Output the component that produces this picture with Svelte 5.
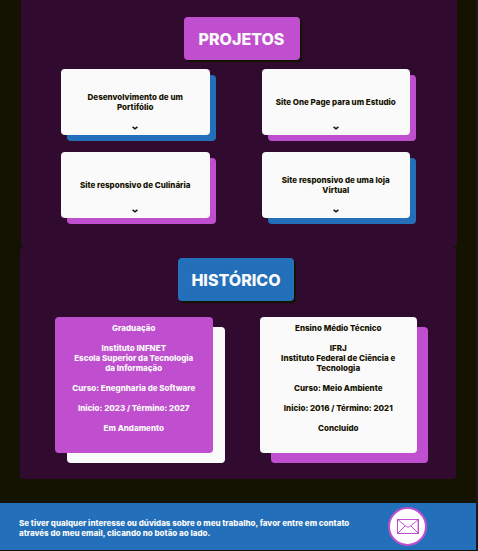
<script>
  const projects = [
    { title: 'Desenvolvimento de um Portifólio', tone: 'blue' },
    { title: 'Site One Page para um Estudio', tone: 'pink' },
    { title: 'Site responsivo de Culinária', tone: 'pink' },
    { title: 'Site responsivo de uma loja Virtual', tone: 'blue' }
  ];

  const history = [
    {
      level: 'Graduação',
      school: 'Instituto INFNET',
      detail: 'Escola Superior da Tecnologia da Informação',
      course: 'Curso: Enegnharia de Software',
      dates: 'Inicio: 2023 / Término: 2027',
      status: 'Em Andamento',
      tone: 'filled'
    },
    {
      level: 'Ensino Médio Técnico',
      school: 'IFRJ',
      detail: 'Instituto Federal de Ciência e Tecnologia',
      course: 'Curso: Meio Ambiente',
      dates: 'Inicio: 2016 / Término: 2021',
      status: 'Concluído',
      tone: 'light'
    }
  ];
</script>

<div class="page">
  <main>
    <section class="panel projects">
      <h2 class="title pink">PROJETOS</h2>
      <div class="project-grid">
        {#each projects as project}
          <button type="button" class="project {project.tone}">
            <span class="name">{project.title}</span>
            <svg class="chevron" viewBox="0 0 6 4" aria-hidden="true">
              <path d="M0.6 0.8 L3 2.8 L5.4 0.8" fill="none" stroke="#141200" stroke-width="1.5" />
            </svg>
          </button>
        {/each}
      </div>
    </section>

    <section class="panel history">
      <h2 class="title blue">HISTÓRICO</h2>
      <div class="history-grid">
        {#each history as item}
          <article class="record {item.tone}">
            <h3>{item.level}</h3>
            <p>{item.school}<br />{item.detail}</p>
            <p>{item.course}</p>
            <p>{item.dates}</p>
            <p>{item.status}</p>
          </article>
        {/each}
      </div>
    </section>
  </main>

  <footer>
    <p>
      Se tiver qualquer interesse ou dúvidas sobre o meu trabalho, favor entre em contato
      através do meu email, clicando no botão ao lado.
    </p>
    <a href="mailto:contato@example.com" aria-label="Enviar email">
      <svg viewBox="0 0 22 15" aria-hidden="true">
        <g fill="none" stroke="#c04fcf">
          <rect x="0.5" y="0.5" width="21" height="14" />
          <path d="M0.5 0.5 L9.5 7.6 Q11 8.8 12.5 7.6 L21.5 0.5 M0.5 14.5 L8.2 6.8 M21.5 14.5 L13.8 6.8" />
          <path d="M20.5 1 V14" stroke-opacity="0.4" />
        </g>
      </svg>
    </a>
  </footer>
</div>

<style>
  :global(body) {
    margin: 0;
    background: #17191c;
  }

  .page {
    margin-right: 2px;
    padding-bottom: 1px;
    background: #141200;
    color: #141200;
    font: 800 8px/10px Inter, "Open Sans", sans-serif;
  }

  main {
    padding: 0 20px 24px;
  }

  h2,
  h3,
  p {
    margin: 0;
    font-size: inherit;
    font-weight: inherit;
  }

  .panel {
    display: flex;
    flex-direction: column;
    align-items: center;
    box-sizing: border-box;
    border-radius: 4px;
    background: #300a2f;
  }

  .projects {
    margin: 0 -1px 0 1px;
    padding: 17px 41px 29px 46px;
    border-radius: 0 0 4px 4px;
  }

  .history {
    padding: 11px 39px 26px 35px;
  }

  .title {
    box-sizing: border-box;
    min-width: 116px;
    padding: 12px 8px 10px;
    border-radius: 4px;
    box-shadow: 2px 2px 1px #141200;
    color: #fafafa;
    font-size: 16px;
    line-height: 21px;
    text-align: center;
  }

  .title.pink {
    background: #c04fcf;
  }

  .title.blue {
    background: #246fba;
  }

  /* The cards step back by the width of their shadow, so card and shadow centre as one. */
  .project-grid {
    display: grid;
    grid-template-columns: 1fr 1fr;
    align-self: stretch;
    gap: 17px 52px;
    margin: 9px 6px 0 -6px;
  }

  .project {
    display: flex;
    flex-direction: column;
    align-items: center;
    justify-content: space-between;
    min-height: 66px;
    padding: 23px 8px 5px;
    border: 0;
    border-radius: 4px;
    background: #fafafa;
    color: inherit;
    font: inherit;
    cursor: pointer;
  }

  .project.blue {
    box-shadow: 6px 6px #246fba;
  }

  .project.pink {
    box-shadow: 6px 6px #c04fcf;
  }

  .name {
    display: flex;
    align-items: center;
    max-width: 130px;
    min-height: 20px;
  }

  .chevron {
    width: 6px;
    height: 4px;
  }

  .history-grid {
    display: grid;
    grid-template-columns: 1fr 1fr;
    gap: 47px;
    width: 100%;
    margin-top: 16px;
  }

  .record {
    display: flex;
    flex-direction: column;
    gap: 10px;
    padding: 6px 14px 20px;
    border-radius: 4px;
    text-align: center;
  }

  .record.filled {
    background: #c04fcf;
    box-shadow: 12px 10px #fafafa;
    color: #fafafa;
  }

  .record.light {
    background: #fafafa;
    box-shadow: 11px 10px #c04fcf;
    color: #141200;
  }

  footer {
    display: flex;
    align-items: center;
    justify-content: space-between;
    padding: 4px 49px 4px 19px;
    background: #246fba;
    color: #fafafa;
  }

  footer p {
    max-width: 352px;
    padding-top: 2px;
  }

  footer a {
    display: flex;
    align-items: center;
    justify-content: center;
    flex: none;
    box-sizing: border-box;
    width: 39px;
    height: 39px;
    border: 2px solid #c04fcf;
    border-radius: 50%;
    background: #fff;
  }

  footer svg {
    width: 22px;
    height: 15px;
  }
</style>
